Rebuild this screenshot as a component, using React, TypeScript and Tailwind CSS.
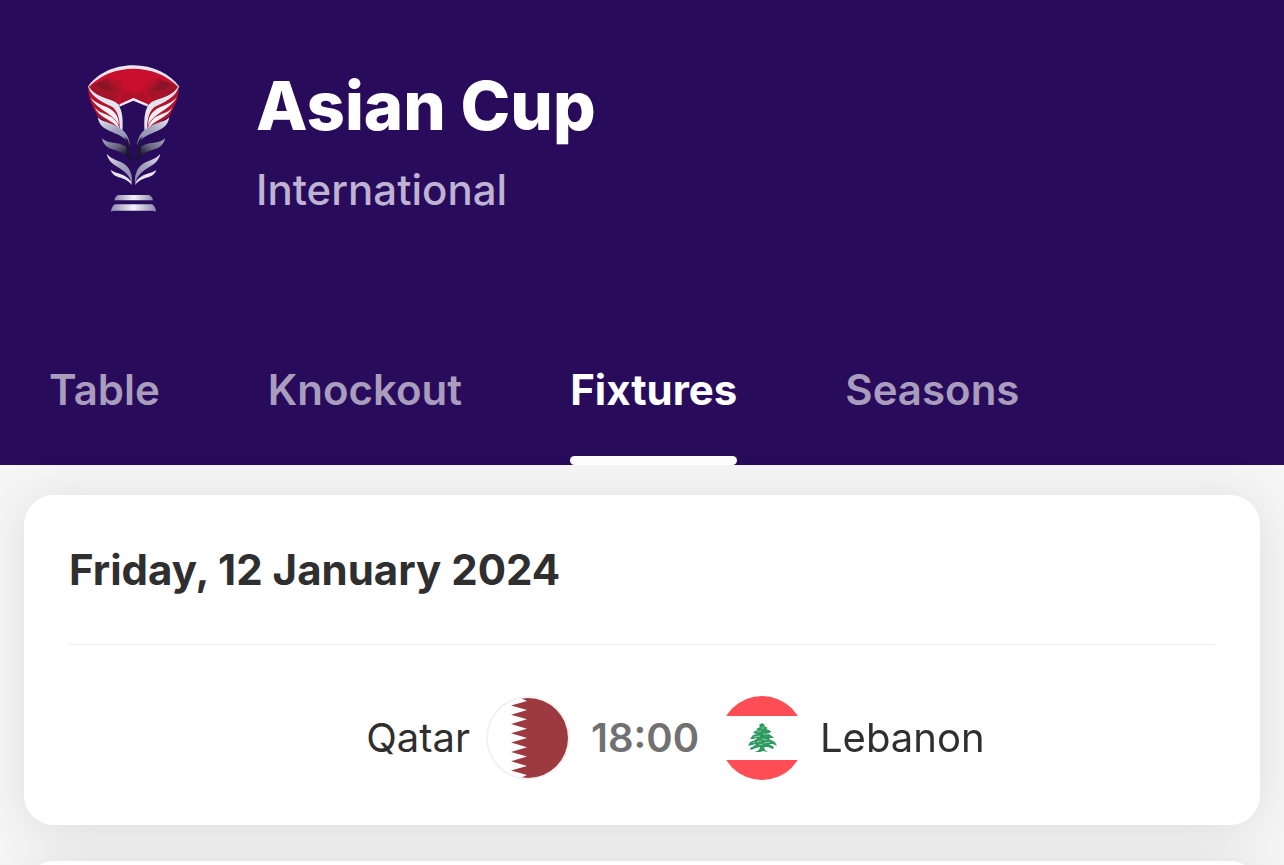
import React from "react";

interface Fixture {
  id: string;
  home: string;
  away: string;
  time: string;
}

const tabs = ["Table", "Knockout", "Fixtures", "Seasons"];

const fixtures: Fixture[] = [
  { id: "qat-lbn", home: "Qatar", away: "Lebanon", time: "18:00" },
];

// One side of the trophy, mirrored for the other
const TrophyHalf: React.FC = () => (
  <>
    <path d="M54 112C56 146 66 168 84 200L148 238C156 216 156 184 146 168C122 152 78 142 54 112Z" fill="#b3122c" />
    <path d="M54 108C72 140 112 144 136 156C158 172 160 206 157 246L149 236C150 206 142 180 126 170C98 156 64 144 54 108Z" fill="#e3e4ef" />
    <path d="M61 142C78 164 112 168 128 182C142 194 147 208 146 226C134 192 80 180 61 142Z" fill="#f4f1f6" />
    <path d="M74 172C86 190 112 192 128 204C140 214 146 224 148 238C128 208 86 204 74 172Z" fill="#f4f1f6" />
    <path d="M83 202C94 214 114 216 134 226C160 236 178 256 180 288C158 238 92 256 83 202Z" fill="url(#steel)" />
    <path d="M96 265C112 282 138 276 156 284C176 292 184 306 181 334L164 314C138 294 104 304 96 265Z" fill="url(#steelDark)" />
    <path d="M162 258C178 268 182 286 181 334L168 300C172 284 170 268 162 258Z" fill="#1d1636" />
    <path d="M110 311C124 330 150 330 166 344C182 358 188 378 186 402C172 346 120 358 110 311Z" fill="url(#steel)" />
    <path d="M122 360C136 370 154 370 168 380C180 388 186 396 185 405C166 376 132 390 122 360Z" fill="#e9e6f4" />
  </>
);

const Trophy: React.FC = () => (
  <svg viewBox="0 0 390 510" className="h-[170px] w-[130px] shrink-0" aria-hidden="true">
    <defs>
      <linearGradient id="steel" x1="0" y1="0" x2="1" y2="1">
        <stop offset="0" stopColor="#e8e8f2" />
        <stop offset="0.5" stopColor="#a3a3be" />
        <stop offset="1" stopColor="#8685aa" />
      </linearGradient>
      <linearGradient id="steelDark" x1="0" y1="0" x2="1" y2="1">
        <stop offset="0" stopColor="#a9a8c4" />
        <stop offset="0.45" stopColor="#66657f" />
        <stop offset="0.8" stopColor="#17122c" />
      </linearGradient>
      <linearGradient id="base" x1="0" x2="1">
        <stop offset="0" stopColor="#8d8aac" />
        <stop offset="0.5" stopColor="#f4f2fa" />
        <stop offset="1" stopColor="#8d8aac" />
      </linearGradient>
    </defs>
    <path d="M54 110C80 72 130 46 190 46C250 46 300 72 328 110L308 134L238 168L190 150L150 168L74 134Z" fill="#e9e4ee" />
    <path d="M57 110C92 74 140 56 190 56C240 56 290 74 324 110C304 140 262 146 236 164L190 143L152 166C118 146 78 142 57 110Z" fill="#c8102e" />
    <path d="M57 110L114 84L152 124L136 156C108 144 76 138 57 110Z" fill="#a3132a" />
    <path d="M324 110L266 84L230 124L246 156C276 144 306 138 324 110Z" fill="#a3132a" />
    <path d="M114 84L152 92L162 120L152 166L132 154L152 124ZM266 84L230 92L220 120L236 164L250 152L230 124Z" fill="#b8122b" />
    <path d="M162 120L190 130L220 120L236 164L190 143L152 166Z" fill="#b01029" />
    <path d="M75 102L110 92L132 122L100 118ZM306 102L272 92L250 122L282 118Z" fill="#8b1526" />
    <TrophyHalf />
    <g transform="translate(381 0) scale(-1 1)">
      <TrophyHalf />
    </g>
    <path d="M150 162L190 144L232 162L234 170L190 152L148 170Z" fill="#efeaf3" />
    <path d="M146 435H235Q246 437 249 451H133Q136 437 146 435Z" fill="url(#base)" />
    <path d="M136 463H245Q255 465 258 485Q253 482 247 482H134Q128 482 123 485Q126 465 136 463Z" fill="url(#base)" />
  </svg>
);

const QatarFlag: React.FC = () => (
  <svg viewBox="0 0 84 84" className="size-[84px] shrink-0" aria-hidden="true">
    <defs>
      <clipPath id="qatarClip">
        <circle cx="42" cy="42" r="40" />
      </clipPath>
    </defs>
    <circle cx="42" cy="42" r="42" fill="#f2f2f2" />
    <g clipPath="url(#qatarClip)">
      <rect width="84" height="84" fill="#ffffff" />
      <path
        d="M84 0H41V5L25 9.500L41 14L25 18.700L41 23.300L25 28L41 32.700L25 37.300L41 42L25 46.600L41 51.300L25 56L41 60.600L25 65.300L41 70L25 74.600L41 79V84H84Z"
        fill="#9c3a3f"
      />
      <path d="M30 0H41V5ZM30 84H41V79Z" fill="#9c3a3f" />
    </g>
  </svg>
);

const LebanonFlag: React.FC = () => (
  <svg viewBox="0 0 84 84" className="size-[84px] shrink-0" aria-hidden="true">
    <defs>
      <clipPath id="lebanonClip">
        <circle cx="42" cy="42" r="42" />
      </clipPath>
    </defs>
    <g clipPath="url(#lebanonClip)">
      <rect width="84" height="84" fill="#ffffff" />
      <rect width="84" height="20" fill="#ff4d55" />
      <rect y="64" width="84" height="20" fill="#ff4d55" />
    </g>
    <path
      d="M42 27L45 29L44 30L48 32L46 33L51 35L50 37L47 37L52 40L54 42L50 42L49 43L55 46L57 50L53 48L49 48L54 51L53 53L48 51L44 51L45 54L48 56L43 55L40 56L35 56L39 54L40 51L36 52L31 54L30 52L34 50L36 48L32 49L28 50L30 46L35 44L37 42L33 43L30 43L33 39L37 38L33 37L35 35L38 34L36 33L40 31L39 29Z"
      fill="#2f9a5f"
    />
    <path
      d="M37 36L41 35M43 38L48 38M34 41L40 40M42 43L47 44M37 46L41 45M44 47L50 46M33 47L35 46M39 49L43 48M41 32L44 32"
      stroke="#a9d8bd"
      strokeWidth="0.8"
      fill="none"
    />
  </svg>
);

const FixtureRow: React.FC<{ fixture: Fixture }> = ({ fixture }) => (
  <li className="grid grid-cols-[1fr_150px_1fr] items-center pl-1.5">
    <div className="flex items-center justify-end gap-4">
      <span>{fixture.home}</span>
      <QatarFlag />
    </div>
    <time className="text-center text-[40px] font-semibold text-[#717171]">
      {fixture.time}
    </time>
    <div className="flex items-center gap-4">
      <LebanonFlag />
      <span>{fixture.away}</span>
    </div>
  </li>
);

const App: React.FC = () => {
  return (
    <div className="h-screen overflow-hidden bg-[#f6f6f6] font-['Inter',sans-serif]">
      <header className="bg-[#290b5c] pt-[50px] text-white">
        <div className="flex items-start gap-[56px] pl-[70px]">
          <Trophy />
          <div className="pt-3.5">
            <h1 className="text-[67px] leading-[84px] font-extrabold">Asian Cup</h1>
            <p className="pt-[18px] text-[42px] leading-[48px] font-medium text-[#bfb3d3]">
              International
            </p>
          </div>
        </div>
        <nav className="mt-[146px] flex gap-[108px] pl-[49px] text-[42px] leading-[48px] font-semibold">
          {tabs.map((tab) => {
            const active = tab === "Fixtures";
            return (
              <a
                key={tab}
                href={`#${tab.toLowerCase()}`}
                aria-current={active ? "page" : undefined}
                className={active ? "font-bold text-white" : "text-[#a99dbe]"}
              >
                {tab}
                <span
                  className={
                    active
                      ? "mt-[42px] block h-[9px] rounded-full bg-white"
                      : "mt-[42px] block h-[9px]"
                  }
                />
              </a>
            );
          })}
        </nav>
      </header>

      {/* the cards share one shadow, so neither darkens the other */}
      <main className="flex flex-col gap-9 px-6 pt-[30px] text-[#2f2f2f] drop-shadow-[0_4px_24px_rgba(0,0,0,0.1)]">
        <section className="rounded-[30px] bg-white px-[45px] pb-[45px]">
          <h2 className="border-b border-[#ededed] pt-[51px] pb-[50px] text-[42px] leading-[48px] font-bold">
            Friday, 12 January 2024
          </h2>
          <ul className="pt-[51px] text-[40px] leading-[48px]">
            {fixtures.map((fixture) => (
              <FixtureRow key={fixture.id} fixture={fixture} />
            ))}
          </ul>
        </section>
        <section className="h-[330px] rounded-[30px] bg-white" />
      </main>
    </div>
  );
};

export default App;
